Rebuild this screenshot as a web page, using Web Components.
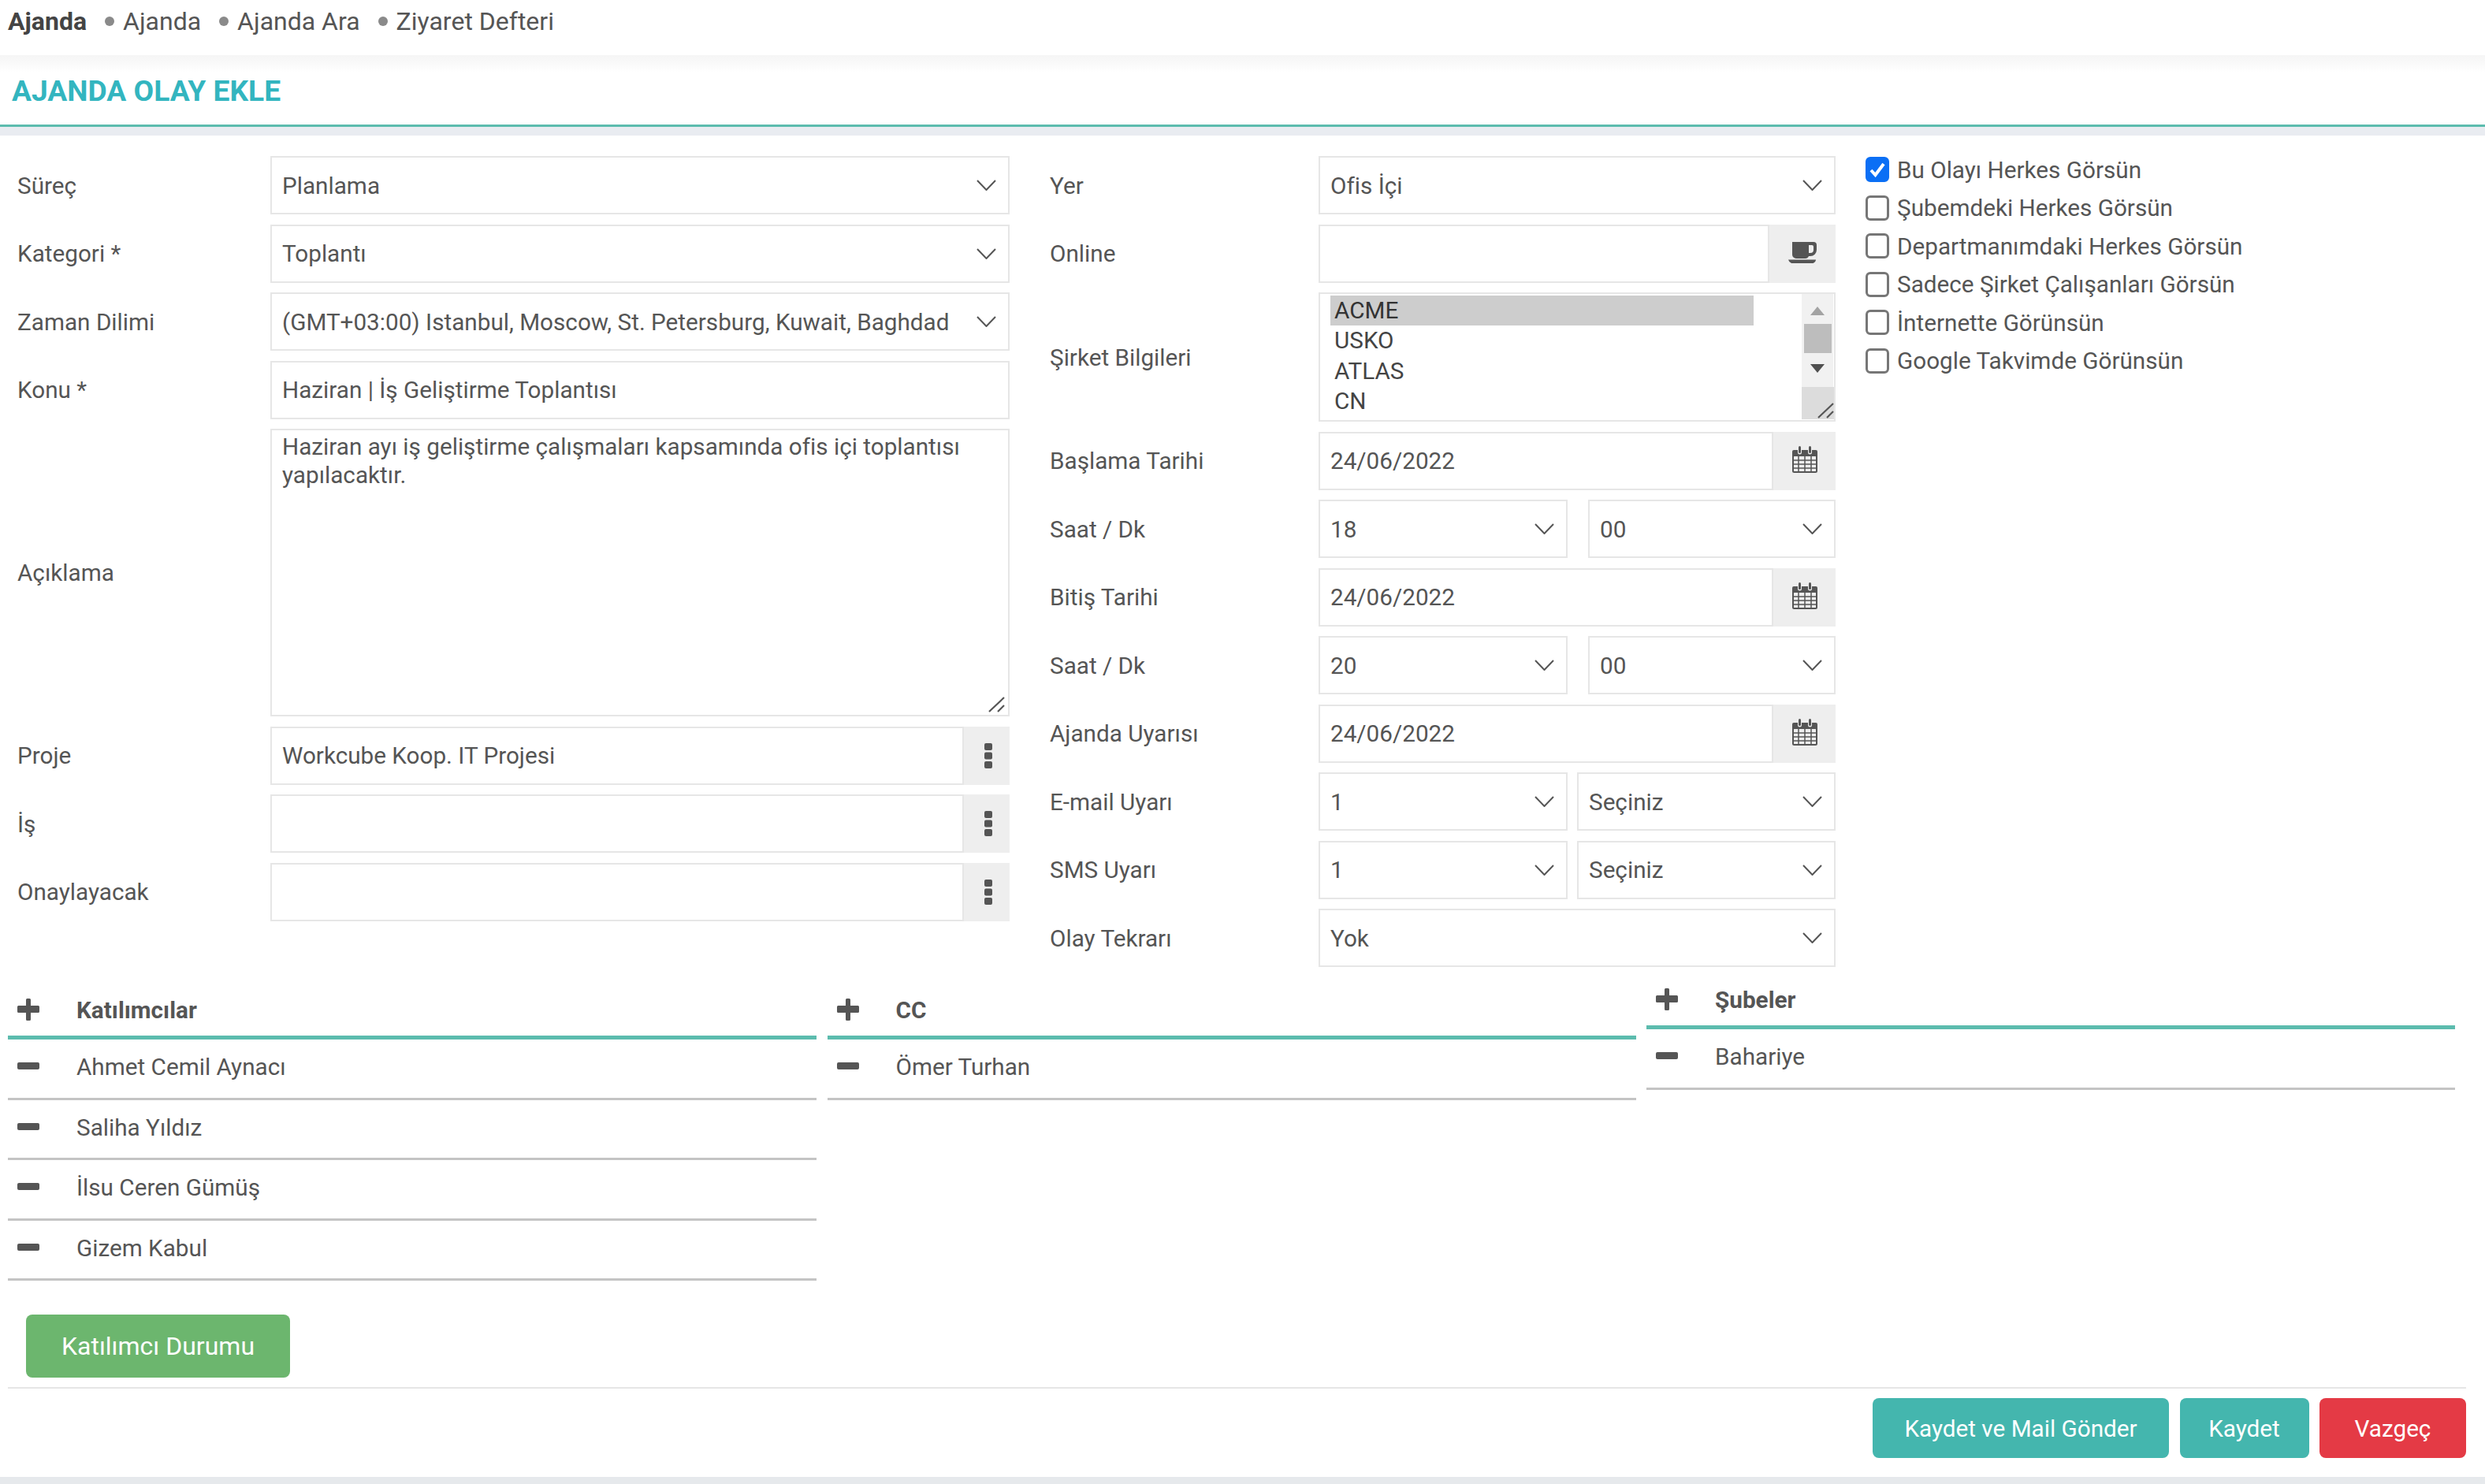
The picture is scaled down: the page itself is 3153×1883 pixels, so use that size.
<!DOCTYPE html>
<html lang="tr">
<head>
<meta charset="utf-8">
<title>Ajanda Olay Ekle</title>
<style>
  html, body { margin: 0; background: #fff; }
  body { width: 3153px; height: 1883px; overflow: hidden; font: 29.700px Roboto, sans-serif; color: #555; }
</style>
</head>
<body>
<top-nav>
  <span slot="title">Ajanda</span>
  <nav-link>Ajanda</nav-link>
  <nav-link>Ajanda Ara</nav-link>
  <nav-link>Ziyaret Defteri</nav-link>
</top-nav>
<page-title>AJANDA OLAY EKLE</page-title>

<event-form>
  <form-col slot="left" style="width:1259px">
    <form-row label="Süreç"><select-box>Planlama</select-box></form-row>
    <form-row label="Kategori *"><select-box>Toplantı</select-box></form-row>
    <form-row label="Zaman Dilimi"><select-box>(GMT+03:00) Istanbul, Moscow, St. Petersburg, Kuwait, Baghdad</select-box></form-row>
    <form-row label="Konu *"><text-box>Haziran | İş Geliştirme Toplantısı</text-box></form-row>
    <form-row label="Açıklama" style="height:365px"><area-box>Haziran ayı iş geliştirme çalışmaları kapsamında ofis içi toplantısı yapılacaktır.</area-box></form-row>
    <form-row label="Proje"><text-box addon="dots">Workcube Koop. IT Projesi</text-box></form-row>
    <form-row label="İş"><text-box addon="dots"></text-box></form-row>
    <form-row label="Onaylayacak"><text-box addon="dots"></text-box></form-row>
  </form-col>

  <form-col slot="middle" style="width:997px;--label:341px">
    <form-row label="Yer"><select-box>Ofis İçi</select-box></form-row>
    <form-row label="Online"><text-box addon="coffee"></text-box></form-row>
    <form-row label="Şirket Bilgileri" style="height:164px">
      <list-box>
        <list-option selected>ACME</list-option>
        <list-option>USKO</list-option>
        <list-option>ATLAS</list-option>
        <list-option>CN</list-option>
      </list-box>
    </form-row>
    <form-row label="Başlama Tarihi"><text-box addon="calendar">24/06/2022</text-box></form-row>
    <form-row label="Saat / Dk"><field-pair><select-box>18</select-box><select-box>00</select-box></field-pair></form-row>
    <form-row label="Bitiş Tarihi"><text-box addon="calendar">24/06/2022</text-box></form-row>
    <form-row label="Saat / Dk"><field-pair><select-box>20</select-box><select-box>00</select-box></field-pair></form-row>
    <form-row label="Ajanda Uyarısı"><text-box addon="calendar">24/06/2022</text-box></form-row>
    <form-row label="E-mail Uyarı"><field-pair tight><select-box>1</select-box><select-box>Seçiniz</select-box></field-pair></form-row>
    <form-row label="SMS Uyarı"><field-pair tight><select-box>1</select-box><select-box>Seçiniz</select-box></field-pair></form-row>
    <form-row label="Olay Tekrarı"><select-box>Yok</select-box></form-row>
  </form-col>

  <check-list slot="right">
    <check-item checked>Bu Olayı Herkes Görsün</check-item>
    <check-item>Şubemdeki Herkes Görsün</check-item>
    <check-item>Departmanımdaki Herkes Görsün</check-item>
    <check-item>Sadece Şirket Çalışanları Görsün</check-item>
    <check-item>İnternette Görünsün</check-item>
    <check-item>Google Takvimde Görünsün</check-item>
  </check-list>
</event-form>

<section-grid>
  <list-section heading="Katılımcılar" style="margin-top:13px">
    <list-row>Ahmet Cemil Aynacı</list-row>
    <list-row>Saliha Yıldız</list-row>
    <list-row>İlsu Ceren Gümüş</list-row>
    <list-row>Gizem Kabul</list-row>
  </list-section>
  <list-section heading="CC" style="margin-top:13px">
    <list-row>Ömer Turhan</list-row>
  </list-section>
  <list-section heading="Şubeler">
    <list-row>Bahariye</list-row>
  </list-section>
</section-grid>

<status-bar><action-button color="green" big>Katılımcı Durumu</action-button></status-bar>

<form-footer>
  <action-button color="teal" style="width:376px">Kaydet ve Mail Gönder</action-button>
  <action-button color="teal" style="width:164px">Kaydet</action-button>
  <action-button color="red" style="width:186px">Vazgeç</action-button>
</form-footer>
<page-end></page-end>

<script>
// small helper, every element has the same constructor otherwise
function shadow(el, html) {
  el.attachShadow({mode: 'open'}).innerHTML = html;
}

const ICONS = {
  dots: `<svg width="10" height="32" viewBox="0 0 10 32" fill="#555">
      <rect y="0" width="10" height="9" rx="2"/><rect y="11.5" width="10" height="9" rx="2"/><rect y="23" width="10" height="9" rx="2"/></svg>`,
  coffee: `<svg width="36" height="28" viewBox="0 0 36 28" fill="#555">
      <path fill-rule="evenodd" d="M5 0h27a4 4 0 0 1 4 4v6a8 8 0 0 1-8 8h-2a5 5 0 0 1-5 3H10a5 5 0 0 1-5-5z M26 4v10h2a4 4 0 0 0 4-4V6a2 2 0 0 0-2-2z"/>
      <path d="M0 22.500h35q0 2.500-3.500 4.500H4Q0.500 25 0 22.500z"/></svg>`,
  calendar: `<svg width="32" height="34" viewBox="0 0 32 34" fill="none" stroke="#555">
      <path fill="#555" stroke="none" d="M2 5h5v3a2.500 2.500 0 0 0 5 0V5h8v3a2.500 2.500 0 0 0 5 0V5h5a2 2 0 0 1 2 2v6H0V7a2 2 0 0 1 2-2z"/>
      <rect x="8" y="0" width="3" height="9" rx="1.500" fill="#555" stroke="none"/><rect x="21" y="0" width="3" height="9" rx="1.500" fill="#555" stroke="none"/>
      <rect x="1" y="12" width="30" height="21" rx="1.500" stroke-width="2"/>
      <path stroke-width="1.500" d="M8 13v20M16 13v20M24 13v20M1 18h30M1 23h30M1 28h30"/></svg>`,
  plus: `<svg width="28" height="28" viewBox="0 0 28 28" fill="#555"><path d="M11 1.500a1.500 1.500 0 0 1 1.500-1.500h3A1.500 1.500 0 0 1 17 1.500V9h9.500A1.500 1.500 0 0 1 28 10.500v6a1.500 1.500 0 0 1-1.500 1.500H17v8.500a1.500 1.500 0 0 1-1.500 1.500h-3a1.500 1.500 0 0 1-1.500-1.500V18H1.500A1.500 1.500 0 0 1 0 16.500v-6A1.500 1.500 0 0 1 1.500 9H11z"/></svg>`,
  minus: `<svg width="28" height="9" viewBox="0 0 28 9" fill="#555"><rect width="28" height="9" rx="2"/></svg>`,
  resize: `<svg width="22" height="22" viewBox="0 0 22 22" fill="none" stroke="#555" stroke-width="2.200"><path d="M2 20 21 2M13 20l8-8"/></svg>`
};

class TopNav extends HTMLElement {
  constructor() {
    super();
    shadow(this, `<style>
      :host { display: flex; align-items: center; height: 54px; padding: 0 0 16px 10px; font-size: 32px; color: #555; }
      ::slotted([slot=title]) { font-weight: 700; color: #444; margin-right: 23px; }
    </style><slot name="title"></slot><slot></slot>`);
  }
}

class NavLink extends HTMLElement {
  constructor() {
    super();
    shadow(this, `<style>
      :host { display: inline-flex; align-items: center; margin-right: 23px; }
      i { width: 12px; height: 12px; border-radius: 50%; background: #8a8a8a; margin-right: 11px; }
    </style><i></i><slot></slot>`);
  }
}

class PageTitle extends HTMLElement {
  constructor() {
    super();
    shadow(this, `<style>
      :host { display: block; background: linear-gradient(#f5f5f5, #fff 22px); }
      div { display: flex; align-items: center; height: 91px; padding: 2px 0 0 15px; box-sizing: border-box;
        font-size: 37.200px; font-weight: 700; color: #33b5bf; border-bottom: 3px solid #5cbcae; }
      p { margin: 0; height: 11px; background: #e9ecf1; }
    </style><div><slot></slot></div><p></p>`);
  }
}

class EventForm extends HTMLElement {
  constructor() {
    super();
    shadow(this, `<style>
      :host { display: flex; padding: 26px 0 0 22px; align-items: flex-start; }
      ::slotted([slot=left]) { margin-right: 51px; }
      ::slotted([slot=middle]) { margin-right: 38px; }
    </style><slot name="left"></slot><slot name="middle"></slot><slot name="right"></slot>`);
  }
}

class FormCol extends HTMLElement {
  constructor() {
    super();
    shadow(this, `<style>:host { display: flex; flex-direction: column; gap: 12.500px; flex: none; }</style><slot></slot>`);
  }
}

class FormRow extends HTMLElement {
  constructor() {
    super();
    shadow(this, `<style>
      :host { display: grid; grid-template-columns: var(--label, 321px) 1fr; align-items: center; height: 74px; }
      span { color: #555; }
      div { display: flex; height: 100%; min-width: 0; }
    </style><span></span><div><slot></slot></div>`);
  }
  connectedCallback() {
    this.shadowRoot.querySelector('span').textContent = this.getAttribute('label');
  }
}

class SelectBox extends HTMLElement {
  constructor() {
    super();
    shadow(this, `<style>
      :host { display: flex; flex: 1; align-items: center; box-sizing: border-box; height: 74px; min-width: 0;
        border: 2px solid #e6e6e6; padding: 0 15px 0 13px; color: #555; white-space: nowrap; }
      span { flex: 1; }
      svg { flex: none; margin-left: 12px; }
    </style><span><slot></slot></span>
    <svg width="25" height="14" viewBox="0 0 25 14" fill="none" stroke="#555" stroke-width="2"><path d="M1 1l11.500 12L24 1"/></svg>`);
  }
}

class TextBox extends HTMLElement {
  constructor() {
    super();
    shadow(this, `<style>
      :host { display: flex; flex: 1; height: 74px; }
      .input { flex: 1; display: flex; align-items: center; box-sizing: border-box; border: 2px solid #e6e6e6;
        padding: 0 13px; color: #555; white-space: nowrap; }
      .addon { flex: none; display: flex; align-items: center; justify-content: center; background: #eee; }
      .dots { width: 58px; } .coffee { width: 84px; } .calendar { width: 79px; }
      .dots svg { margin-left: 4px; }
      .coffee svg { margin-top: -2px; }
      .calendar svg { margin-top: -3px; }
    </style><div class="input"><slot></slot></div>`);
  }
  connectedCallback() {
    const name = this.getAttribute('addon');
    if (name && !this.shadowRoot.querySelector('.addon')) {
      const addon = document.createElement('div');
      addon.className = 'addon ' + name;
      addon.innerHTML = ICONS[name];
      this.shadowRoot.appendChild(addon);
    }
  }
}

class AreaBox extends HTMLElement {
  constructor() {
    super();
    shadow(this, `<style>
      :host { display: block; flex: 1; position: relative; box-sizing: border-box; border: 2px solid #e6e6e6;
        padding: 3px 13px; line-height: 36px; color: #555; }
      svg { position: absolute; right: 4px; bottom: 2px; }
    </style><slot></slot>${ICONS.resize}`);
  }
}

class ListBox extends HTMLElement {
  constructor() {
    super();
    shadow(this, `<style>
      :host { display: flex; flex: 1; box-sizing: border-box; border: 2px solid #e6e6e6; overflow: hidden; }
      .opts { flex: 1; padding: 2px 61px 0 13px; }
      .bar { flex: none; width: 40px; margin: 0 1px 1px 0; display: flex; flex-direction: column; align-items: center; background: #f1f1f1; }
      .up { margin-top: 16px; border: 9.500px solid transparent; border-top: 0; border-bottom: 11px solid #a3a3a3; }
      .thumb { width: 35px; height: 37px; background: #bdbdbd; margin-top: 11px; }
      .down { margin-top: 14px; border: 9.500px solid transparent; border-bottom: 0; border-top: 11px solid #505050; }
      .corner { margin-top: auto; width: 41px; height: 41px; background: #dcdcdc; display: flex; align-items: flex-end; justify-content: flex-end; }
    </style>
    <div class="opts"><slot></slot></div>
    <div class="bar"><i class="up"></i><i class="thumb"></i><i class="down"></i><div class="corner">${ICONS.resize}</div></div>`);
  }
}

class ListOption extends HTMLElement {
  constructor() {
    super();
    shadow(this, `<style>
      :host { display: block; height: 38.400px; line-height: 38.400px; padding-left: 5px; color: #444; }
      :host([selected]) { background: #cdcdcd; color: #333; }
    </style><slot></slot>`);
  }
}

class FieldPair extends HTMLElement {
  constructor() {
    super();
    shadow(this, `<style>
      :host { display: grid; flex: 1; grid-template-columns: 316px 1fr; column-gap: 26px; }
      :host([tight]) { column-gap: 12px; }
    </style><slot></slot>`);
  }
}

class CheckList extends HTMLElement {
  constructor() {
    super();
    shadow(this, `<style>:host { display: flex; flex-direction: column; gap: 16.600px; margin-top: 1px; }</style><slot></slot>`);
  }
}

class CheckItem extends HTMLElement {
  constructor() {
    super();
    shadow(this, `<style>
      :host { display: flex; align-items: center; height: 32px; white-space: nowrap; color: #555; }
      i { flex: none; box-sizing: border-box; display: flex; align-items: center; justify-content: center;
        width: 30px; height: 32px; margin-right: 10px; border: 3px solid #767676; border-radius: 6px; background: #fff; }
      :host([checked]) i { background: #0b6ff5; border-color: #0b6ff5; }
      svg { display: none; }
      :host([checked]) svg { display: block; }
    </style><i><svg width="20" height="20" viewBox="0 0 20 20" fill="none" stroke="#fff" stroke-width="4"><path d="M2 11l5.500 6L18 3"/></svg></i><slot></slot>`);
  }
}

class SectionGrid extends HTMLElement {
  constructor() {
    super();
    shadow(this, `<style>
      :host { display: grid; grid-template-columns: repeat(3, 1026px); column-gap: 13.500px; align-items: start; padding: 3px 0 0 10px; }
    </style><slot></slot>`);
  }
}

class ListSection extends HTMLElement {
  constructor() {
    super();
    shadow(this, `<style>
      :host { display: block; }
      header { display: flex; align-items: center; box-sizing: border-box; height: 76px; padding: 4px 0 0 12px;
        border-bottom: 5px solid #5cbcae; font-weight: 700; color: #555; }
      header span { margin: 2px 0 0 47px; }
    </style><header>${ICONS.plus}<span></span></header><slot></slot>`);
  }
  connectedCallback() {
    this.shadowRoot.querySelector('span').textContent = this.getAttribute('heading');
  }
}

class ListRow extends HTMLElement {
  constructor() {
    super();
    shadow(this, `<style>
      :host { display: flex; align-items: center; box-sizing: border-box; height: 76.500px; padding: 0 0 4px 12px;
        border-bottom: 3px solid #c4c4c4; color: #555; }
      svg { margin: -2px 47px 0 0; flex: none; }
    </style>${ICONS.minus}<slot></slot>`);
  }
}

class StatusBar extends HTMLElement {
  constructor() {
    super();
    shadow(this, `<style>
      :host { display: block; margin: 43px 0 0 10px; padding: 0 0 12px 23px; width: 3096px; border-bottom: 2px solid #e6e6e6; }
    </style><slot></slot>`);
  }
}

class FormFooter extends HTMLElement {
  constructor() {
    super();
    shadow(this, `<style>
      :host { display: flex; justify-content: flex-end; gap: 13.500px; width: 3129px; padding-top: 12px; height: 77px; }
    </style><slot></slot>`);
  }
}

class ActionButton extends HTMLElement {
  constructor() {
    super();
    shadow(this, `<style>
      :host { display: inline-flex; align-items: center; justify-content: center; box-sizing: border-box; height: 76px;
        border-radius: 8px; color: #fff; white-space: nowrap; }
      :host([color=teal]) { background: #44b6ae; }
      :host([color=red]) { background: #e43a45; }
      :host([color=green]) { background: #6cb66e; }
      :host([big]) { width: 335px; height: 80px; font-size: 32px; }
    </style><slot></slot>`);
  }
}

class PageEnd extends HTMLElement {
  constructor() {
    super();
    shadow(this, `<style>:host { display: block; height: 9px; margin-top: 23px; background: #e6e9ec; }</style>`);
  }
}

customElements.define('top-nav', TopNav);
customElements.define('nav-link', NavLink);
customElements.define('page-title', PageTitle);
customElements.define('event-form', EventForm);
customElements.define('form-col', FormCol);
customElements.define('form-row', FormRow);
customElements.define('select-box', SelectBox);
customElements.define('text-box', TextBox);
customElements.define('area-box', AreaBox);
customElements.define('list-box', ListBox);
customElements.define('list-option', ListOption);
customElements.define('field-pair', FieldPair);
customElements.define('check-list', CheckList);
customElements.define('check-item', CheckItem);
customElements.define('section-grid', SectionGrid);
customElements.define('list-section', ListSection);
customElements.define('list-row', ListRow);
customElements.define('status-bar', StatusBar);
customElements.define('form-footer', FormFooter);
customElements.define('action-button', ActionButton);
customElements.define('page-end', PageEnd);
</script>
</body>
</html>
